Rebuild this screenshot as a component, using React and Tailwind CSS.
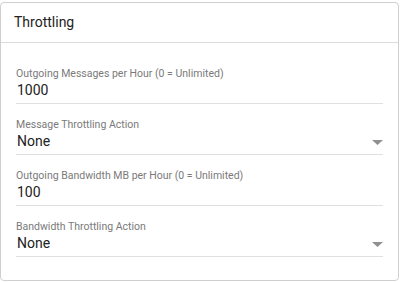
const fields = [
  { label: "Outgoing Messages per Hour (0 = Unlimited)", value: "1000", select: false },
  { label: "Message Throttling Action", value: "None", select: true },
  { label: "Outgoing Bandwidth MB per Hour (0 = Unlimited)", value: "100", select: false },
  { label: "Bandwidth Throttling Action", value: "None", select: true },
];

const Field = ({ label, value, select }) => (
  <div className="border-b border-[#e0e0e0] pb-[3px]">
    <div className="text-[10.5px] leading-[13px] text-[#7a7a7a]">{label}</div>
    <div className="flex items-center justify-between text-[14px] leading-[20px] text-[#222]">
      <span className="pl-px">{value}</span>
      {select && (
        <svg width="11" height="5" viewBox="0 0 11 5" className="mt-[2px]">
          <path d="M0 0 L11 0 L5.5 5 Z" fill="#909090" />
        </svg>
      )}
    </div>
  </div>
);

const App = () => {
  return (
    <div className="w-[400px] h-[282px] bg-white pt-[2px] font-['Roboto',sans-serif]">
      <div className="w-[399px] h-[279px] border border-[#cfcfcf] rounded-[4px] bg-white">
        {/* Header */}
        <div className="h-[40px] flex items-center px-[13px] border-b border-[#dcdcdc]">
          <h2 className="text-[14px] text-[#222]">Throttling</h2>
        </div>

        {/* Fields */}
        <div className="px-[15px] pt-[24px] flex flex-col gap-[14px]">
          {fields.map((f) => (
            <Field key={f.label} {...f} />
          ))}
        </div>
      </div>
    </div>
  );
};

export default App;
